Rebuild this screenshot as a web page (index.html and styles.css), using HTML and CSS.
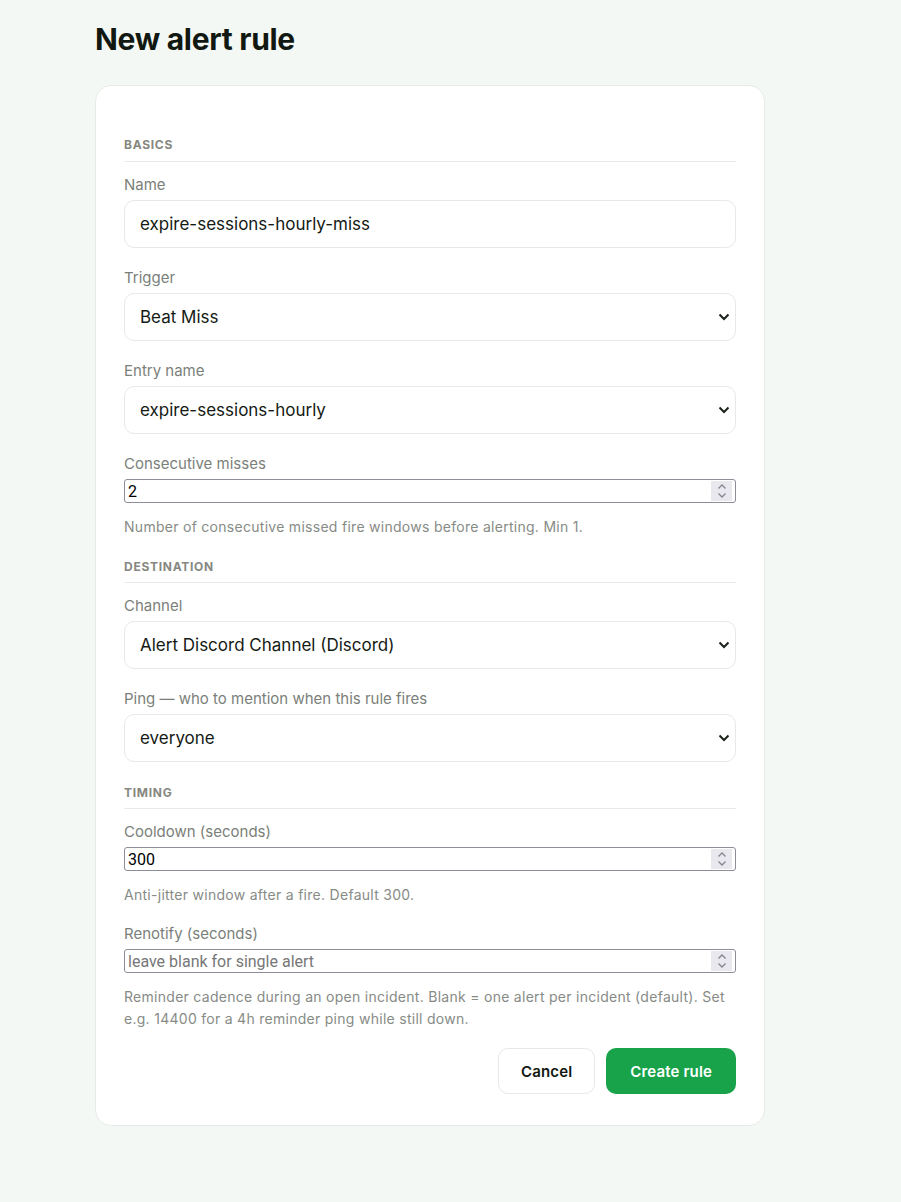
FILE: index.html
```html
<!DOCTYPE html>
<html lang="en">
<head>
    <meta charset="UTF-8">
    <meta name="viewport" content="width=device-width, initial-scale=1.0">
    <title>New alert rule</title>
    <link rel="stylesheet" href="styles.css">
</head>
<body>

<div class="page">
    <h1>New alert rule</h1>

    <form class="card" onsubmit="return false">
        <h2 class="section-title">Basics</h2>

        <div class="field">
            <label for="name">Name</label>
            <input class="text-input" id="name" type="text" value="expire-sessions-hourly-miss">
        </div>

        <div class="field">
            <label for="trigger">Trigger</label>
            <div class="select-wrap">
                <select class="select" id="trigger">
                    <option selected>Beat Miss</option>
                    <option>Task Failure</option>
                </select>
                <svg class="chevron" width="12" height="8" viewBox="0 0 12 8"><path d="M1.5 1.5 6 6l4.5-4.5" fill="none" stroke="#1b221b" stroke-width="2"/></svg>
            </div>
        </div>

        <div class="field">
            <label for="entry">Entry name</label>
            <div class="select-wrap">
                <select class="select" id="entry">
                    <option selected>expire-sessions-hourly</option>
                </select>
                <svg class="chevron" width="12" height="8" viewBox="0 0 12 8"><path d="M1.5 1.5 6 6l4.5-4.5" fill="none" stroke="#1b221b" stroke-width="2"/></svg>
            </div>
        </div>

        <div class="field">
            <label for="misses">Consecutive misses</label>
            <div class="num-wrap">
                <input class="num-input" id="misses" type="number" min="1" value="2">
                <span class="spin">
                    <svg width="10" height="16" viewBox="0 0 10 16"><path d="M1.5 5.5 5 2l3.5 3.5M1.5 10.5 5 14l3.5-3.5" fill="none" stroke="#85848d" stroke-width="1.3"/></svg>
                </span>
            </div>
            <p class="hint">Number of consecutive missed fire windows before alerting. Min 1.</p>
        </div>

        <h2 class="section-title">Destination</h2>

        <div class="field">
            <label for="channel">Channel</label>
            <div class="select-wrap">
                <select class="select" id="channel">
                    <option selected>Alert Discord Channel (Discord)</option>
                </select>
                <svg class="chevron" width="12" height="8" viewBox="0 0 12 8"><path d="M1.5 1.5 6 6l4.5-4.5" fill="none" stroke="#1b221b" stroke-width="2"/></svg>
            </div>
        </div>

        <div class="field">
            <label for="ping">Ping — who to mention when this rule fires</label>
            <div class="select-wrap">
                <select class="select" id="ping">
                    <option selected>everyone</option>
                    <option>here</option>
                    <option>nobody</option>
                </select>
                <svg class="chevron" width="12" height="8" viewBox="0 0 12 8"><path d="M1.5 1.5 6 6l4.5-4.5" fill="none" stroke="#1b221b" stroke-width="2"/></svg>
            </div>
        </div>

        <h2 class="section-title">Timing</h2>

        <div class="field">
            <label for="cooldown">Cooldown (seconds)</label>
            <div class="num-wrap">
                <input class="num-input" id="cooldown" type="number" value="300">
                <span class="spin">
                    <svg width="10" height="16" viewBox="0 0 10 16"><path d="M1.5 5.5 5 2l3.5 3.5M1.5 10.5 5 14l3.5-3.5" fill="none" stroke="#85848d" stroke-width="1.3"/></svg>
                </span>
            </div>
            <p class="hint">Anti-jitter window after a fire. Default 300.</p>
        </div>

        <div class="field">
            <label for="renotify">Renotify (seconds)</label>
            <div class="num-wrap">
                <input class="num-input" id="renotify" type="number" placeholder="leave blank for single alert">
                <span class="spin">
                    <svg width="10" height="16" viewBox="0 0 10 16"><path d="M1.5 5.5 5 2l3.5 3.5M1.5 10.5 5 14l3.5-3.5" fill="none" stroke="#85848d" stroke-width="1.3"/></svg>
                </span>
            </div>
            <p class="hint">Reminder cadence during an open incident. Blank = one alert per incident (default). Set e.g. 14400 for a 4h reminder ping while still down.</p>
        </div>

        <div class="actions">
            <button type="button" class="btn btn-cancel">Cancel</button>
            <button type="submit" class="btn btn-primary">Create rule</button>
        </div>
    </form>
</div>

</body>
</html>
```

FILE: styles.css
```css
body {
    font-family: Inter, "Liberation Sans", sans-serif;
    background-color: #f4f8f4;
    color: #141a14;
    margin: 0;
    padding: 0;
}

.page {
    width: 670px;
    margin-left: 95px;
    padding-top: 21px;
    padding-bottom: 76px;
}

h1 {
    font-size: 30px;
    font-weight: 700;
    letter-spacing: -0.01em;
    line-height: 36px;
    margin: 0 0 28px;
    color: #111811;
}

.card {
    background-color: #fff;
    border: 1px solid #e7ebe7;
    border-radius: 16px;
    padding: 28px 28px 31px;
}

.section-title {
    font-size: 12px;
    font-weight: 700;
    letter-spacing: 0.06em;
    text-transform: uppercase;
    line-height: 16px;
    color: #86887f;
    margin: 23px 0 13px;
    padding-bottom: 7px;
    border-bottom: 1px solid #e8ebe8;
}

.section-title:first-child {
    padding-bottom: 8px;
}

.field {
    margin-bottom: 20px;
}

.field label {
    display: block;
    font-size: 15px;
    line-height: 20px;
    color: #7b7f7a;
    margin-bottom: 5px;
}

.text-input,
.select {
    display: block;
    width: 100%;
    box-sizing: border-box;
    height: 48px;
    padding: 0 12px 0 15px;
    font-family: inherit;
    font-size: 17px;
    color: #141a14;
    background-color: #fff;
    border: 1px solid #e6e9e6;
    border-radius: 10px;
}

.select-wrap {
    position: relative;
}

.select {
    -webkit-appearance: none;
    appearance: none;
    padding-right: 32px;
    cursor: pointer;
}

.chevron {
    position: absolute;
    right: 6px;
    top: 50%;
    margin-top: -4px;
    pointer-events: none;
}

.num-wrap {
    position: relative;
    margin-top: 2px;
}

.num-input {
    display: block;
    width: 100%;
    box-sizing: border-box;
    height: 24px;
    padding: 1px 3px;
    font-family: Roboto, "Liberation Sans", sans-serif;
    font-size: 16px;
    color: #000;
    background-color: #fff;
    border: 1px solid #8f8e98;
    border-radius: 3px;
}

.num-input::placeholder {
    color: #777;
}

.num-input::-webkit-inner-spin-button,
.num-input::-webkit-outer-spin-button {
    -webkit-appearance: none;
    margin: 0;
}

.spin {
    position: absolute;
    top: 2px;
    right: 4px;
    width: 21px;
    height: 20px;
    display: flex;
    align-items: center;
    justify-content: center;
    background-color: #e9e8ee;
    pointer-events: none;
}

.hint {
    font-size: 14px;
    letter-spacing: 0.02em;
    line-height: 22px;
    color: #878b86;
    margin: 13px 0 -2px;
}

.actions {
    display: flex;
    justify-content: flex-end;
    gap: 11px;
}

.btn {
    height: 46px;
    padding: 0 22px;
    font-family: inherit;
    font-size: 15px;
    font-weight: 600;
    letter-spacing: 0.01em;
    border-radius: 10px;
    cursor: pointer;
}

.btn-cancel {
    background-color: #fff;
    color: #111811;
    border: 1px solid #e6e9e6;
}

.btn-primary {
    padding: 0 24px;
    background-color: #18a34a;
    color: #fff;
    border: none;
}

.btn-primary:hover {
    background-color: #15803d;
}
```
